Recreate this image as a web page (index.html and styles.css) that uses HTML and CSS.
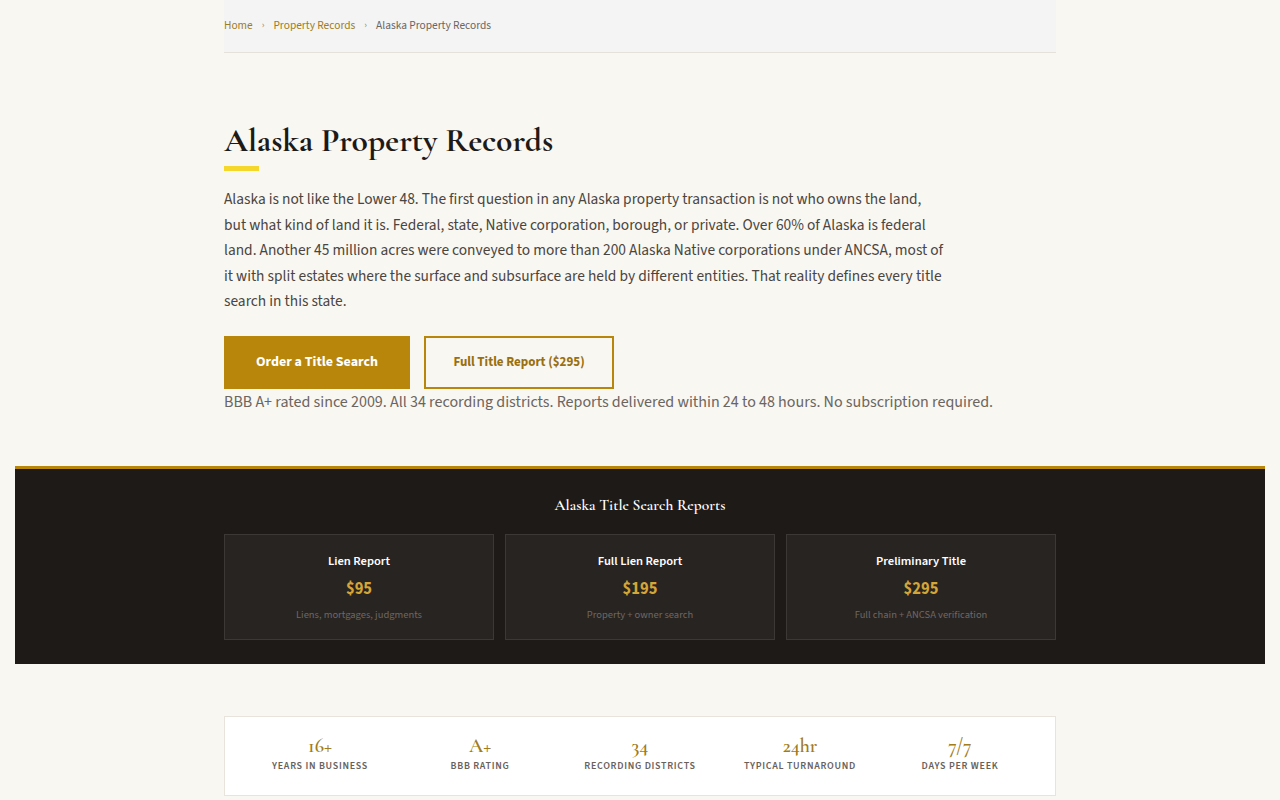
FILE: index.html
```html
<!DOCTYPE html>
<html lang="en">
<head>
<meta charset="utf-8">
<title>Alaska Property Records</title>
<link rel="stylesheet" href="styles.css">
</head>
<body>
<div class="container">
  <nav class="breadcrumb">
    <a href="#">Home</a><span class="sep">›</span><a href="#">Property Records</a><span class="sep">›</span><span class="current">Alaska Property Records</span>
  </nav>
</div>

<section class="container hero">
  <h1 class="hero-title">Alaska Property Records</h1>
  <div class="hero-rule"></div>
  <p class="hero-text">Alaska is not like the Lower 48. The first question in any Alaska property transaction is not who owns the land, but what kind of land it is. Federal, state, Native corporation, borough, or private. Over 60% of Alaska is federal land. Another 45 million acres were conveyed to more than 200 Alaska Native corporations under ANCSA, most of it with split estates where the surface and subsurface are held by different entities. That reality defines every title search in this state.</p>
  <div class="hero-actions">
    <a class="btn btn-primary" href="#">Order a Title Search</a>
    <a class="btn btn-outline" href="#">Full Title Report ($295)</a>
  </div>
  <p class="hero-note">BBB A+ rated since 2009. All 34 recording districts. Reports delivered within 24 to 48 hours. No subscription required.</p>
</section>

<section class="reports">
  <div class="container">
    <h2 class="reports-title">Alaska Title Search Reports</h2>
    <div class="report-grid">
      <div class="report-card">
        <div class="report-name">Lien Report</div>
        <div class="report-price">$95</div>
        <div class="report-desc">Liens, mortgages, judgments</div>
      </div>
      <div class="report-card">
        <div class="report-name">Full Lien Report</div>
        <div class="report-price">$195</div>
        <div class="report-desc">Property + owner search</div>
      </div>
      <div class="report-card">
        <div class="report-name">Preliminary Title</div>
        <div class="report-price">$295</div>
        <div class="report-desc">Full chain + ANCSA verification</div>
      </div>
    </div>
  </div>
</section>

<section class="container">
  <div class="stats">
    <div class="stat"><div class="stat-num">16+</div><div class="stat-label">Years in Business</div></div>
    <div class="stat"><div class="stat-num">A+</div><div class="stat-label">BBB Rating</div></div>
    <div class="stat"><div class="stat-num">34</div><div class="stat-label">Recording Districts</div></div>
    <div class="stat"><div class="stat-num">24hr</div><div class="stat-label">Typical Turnaround</div></div>
    <div class="stat"><div class="stat-num">7/7</div><div class="stat-label">Days per Week</div></div>
  </div>
</section>
</body>
</html>
```

FILE: styles.css
```css
* { box-sizing: border-box; }
html, body { margin: 0; padding: 0; }
body {
  background: #f9f7f2;
  font-family: "Source Sans Pro", "Source Sans 3", Lato, "Liberation Sans", sans-serif;
  color: #4a4540;
}
a { text-decoration: none; }

.container {
  width: 832px;
  margin: 0 auto;
}

.breadcrumb {
  background: #f4f4f4;
  border-bottom: 1px solid #e4e1db;
  height: 53px;
  padding-bottom: 2px;
  display: flex;
  align-items: center;
  font-size: 11.4px;
  color: #6b6560;
}
.breadcrumb a { color: #a07c1c; }
.breadcrumb .sep { margin: 0 9px; color: #8a8580; font-size: 10px; }
.breadcrumb .current { color: #6b6560; }

.hero { padding-top: 68px; }
.hero-title {
  font-family: "Cormorant Garamond", "Liberation Serif", serif;
  font-weight: 700;
  font-size: 33.6px;
  line-height: 40px;
  color: #1e1a17;
  margin: 0;
}
.hero-rule {
  width: 35px;
  height: 5px;
  background: #f5d62a;
  margin-top: 5px;
}
.hero-text {
  margin: 16px 0 0;
  max-width: 721px;
  font-size: 15.4px;
  line-height: 25.6px;
  color: #4a4540;
}
.hero-actions {
  display: flex;
  gap: 14px;
  margin-top: 21px;
}
.btn {
  display: flex;
  align-items: center;
  justify-content: center;
  height: 53px;
  font-weight: 700;
  font-size: 14px;
}
.btn-primary {
  width: 186px;
  background: #b8860b;
  color: #fff;
}
.btn-outline {
  width: 190px;
  border: 2px solid #b8860b;
  color: #9a700f;
  font-size: 13px;
}
.hero-note {
  margin: 2px 0 0;
  font-size: 16px;
  line-height: 22px;
  color: #6b6560;
}

.reports {
  margin: 53px 15px 0;
  background: #1e1a17;
  border-top: 3px solid #b8860b;
  padding: 25px 0 24px;
}
.reports-title {
  margin: 0;
  text-align: center;
  font-family: "Cormorant Garamond", "Liberation Serif", serif;
  font-weight: 600;
  font-size: 15.5px;
  line-height: 22px;
  color: #fff;
}
.report-grid {
  display: grid;
  grid-template-columns: repeat(3, 1fr);
  gap: 11px;
  margin-top: 18px;
}
.report-card {
  background: #282422;
  border: 1px solid #3c3835;
  height: 106px;
  display: flex;
  flex-direction: column;
  align-items: center;
  padding-top: 17px;
}
.report-name {
  font-weight: 600;
  font-size: 12.5px;
  line-height: 18px;
  color: #fff;
}
.report-price {
  font-weight: 700;
  font-size: 16.5px;
  line-height: 22px;
  color: #d4a537;
  margin-top: 8px;
}
.report-desc {
  font-size: 10.5px;
  line-height: 16px;
  color: #6e6863;
  margin-top: 7px;
}

.stats {
  margin-top: 52px;
  background: #fff;
  border: 1px solid #e8e4dc;
  height: 80px;
  padding: 0 15px;
  display: grid;
  grid-template-columns: repeat(5, 1fr);
  align-items: center;
}
.stat {
  text-align: center;
  padding-bottom: 2px;
}
.stat-num {
  font-family: "Cormorant Garamond", "Liberation Serif", serif;
  font-weight: 600;
  font-size: 20px;
  line-height: 20px;
  color: #a07c1c;
}
.stat-label {
  font-size: 10px;
  font-weight: 600;
  letter-spacing: 0.7px;
  text-transform: uppercase;
  color: #67615b;
  margin-top: 3px;
}
```
